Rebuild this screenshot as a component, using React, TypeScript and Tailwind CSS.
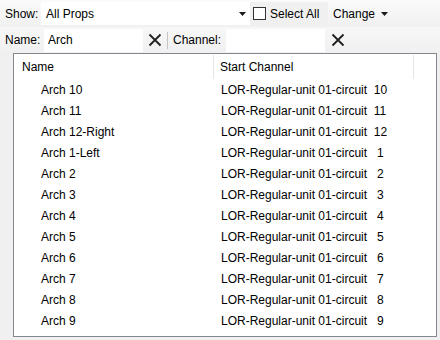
import React from 'react';

const rows = [
  ['Arch 10', 10],
  ['Arch 11', 11],
  ['Arch 12-Right', 12],
  ['Arch 1-Left', 1],
  ['Arch 2', 2],
  ['Arch 3', 3],
  ['Arch 4', 4],
  ['Arch 5', 5],
  ['Arch 6', 6],
  ['Arch 7', 7],
  ['Arch 8', 8],
  ['Arch 9', 9],
] as const;

const Caret = () => (
  <svg width="7" height="4" viewBox="0 0 7 4">
    <path d="M0 0 H7 L3.5 4 Z" fill="#1a1a1a" />
  </svg>
);

const Cross = () => (
  <svg width="14" height="14" viewBox="0 0 14 14">
    <path d="M1.5 1.5 L12.5 12.5 M12.5 1.5 L1.5 12.5" stroke="#1f1f1f" strokeWidth="1.8" />
  </svg>
);

export default function App() {
  return (
    <div
      className="w-[440px] h-[340px] bg-[#f0f0f0] text-[12px] text-[#000] overflow-hidden flex flex-col"
      style={{ fontFamily: '"Liberation Sans", Arial, sans-serif' }}
    >
      {/* Show toolbar */}
      <div className="h-[27px] flex items-center bg-gradient-to-b from-[#fbfbfb] to-[#f0f0f0]">
        <span className="pl-[5px] w-[41px]">Show:</span>
        <div className="w-[209px] h-[23px] bg-white flex items-center justify-between pl-[5px] pr-[4px]">
          <span>All Props</span>
          <Caret />
        </div>
        <div className="w-[78px] h-[23px] bg-[#f0f0f0] flex items-center pl-[3px] gap-[4px]">
          <div className="w-[13px] h-[13px] border border-[#333] bg-white" />
          <span>Select All</span>
        </div>
        <div className="flex items-center pl-[5px] gap-[6px]">
          <span>Change</span>
          <Caret />
        </div>
      </div>

      {/* Name / Channel toolbar */}
      <div className="h-[26px] flex items-center bg-gradient-to-b from-[#f7f7f7] to-[#f0f0f0]">
        <span className="pl-[5px] w-[44px]">Name:</span>
        <div className="w-[99px] h-[23px] bg-white flex items-center pl-[4px]">Arch</div>
        <div className="w-[24px] flex justify-center">
          <Cross />
        </div>
        <div className="w-px h-[17px] bg-[#c4c4c4]" />
        <span className="pl-[5px] w-[58px]">Channel:</span>
        <div className="w-[99px] h-[23px] bg-white" />
        <div className="w-[26px] flex justify-center">
          <Cross />
        </div>
      </div>

      {/* List */}
      <div className="ml-[13px] w-[424px] h-[284px] border border-[#828790] bg-white flex flex-col">
        <div className="h-[25px] flex items-stretch pt-[1px]">
          <div className="w-[200px] pl-[8px] flex items-center border-r border-[#e5e5e5]">Name</div>
          <div className="w-[200px] pl-[6px] flex items-center border-r border-[#e5e5e5]">Start Channel</div>
        </div>
        {rows.map(([name, n]) => (
          <div key={name} className="h-[21px] flex items-center">
            <div className="w-[201px] pl-[27px]">{name}</div>
            <div className="pl-[6px] whitespace-pre">
              {'LOR-Regular-unit 01-circuit' + (n < 10 ? '   ' : '  ') + n}
            </div>
          </div>
        ))}
      </div>
    </div>
  );
}
